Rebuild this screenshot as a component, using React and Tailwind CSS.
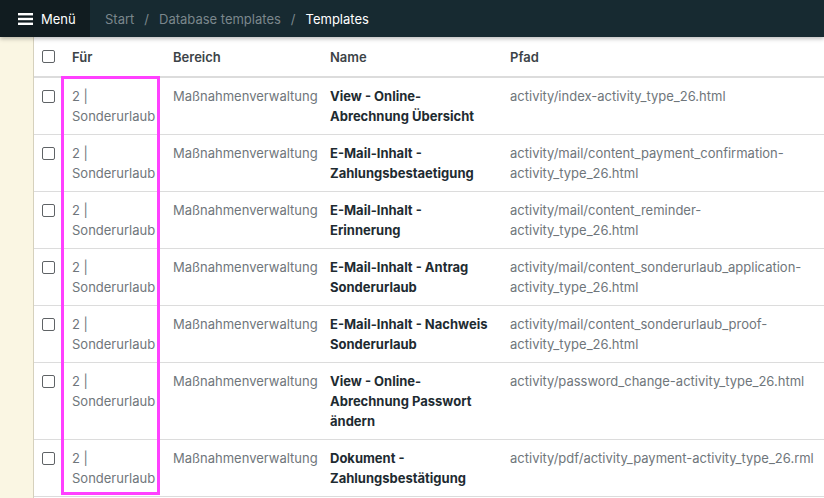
import React from "react";

const rows = [
  ["View - Online-Abrechnung Übersicht", "activity/index-activity_type_26.html"],
  ["E-Mail-Inhalt - Zahlungsbestaetigung", "activity/mail/content_payment_confirmation-activity_type_26.html"],
  ["E-Mail-Inhalt - Erinnerung", "activity/mail/content_reminder-activity_type_26.html"],
  ["E-Mail-Inhalt - Antrag Sonderurlaub", "activity/mail/content_sonderurlaub_application-activity_type_26.html"],
  ["E-Mail-Inhalt - Nachweis Sonderurlaub", "activity/mail/content_sonderurlaub_proof-activity_type_26.html"],
  ["View - Online-Abrechnung Passwort ändern", "activity/password_change-activity_type_26.html"],
  ["Dokument - Zahlungsbestätigung", "activity/pdf/activity_payment-activity_type_26.rml"],
];

function Box() {
  return <span className="block w-[13px] h-[13px] rounded-[2px] border border-[#5f6366] bg-white" />;
}

export default function App() {
  return (
    <div className="w-[824px] h-[498px] overflow-hidden bg-white font-['Inter',sans-serif] text-[13px] leading-[20px]">
      <div className="relative z-10 h-[37px] flex items-center bg-[#172a31] shadow-[0_2px_4px_rgba(0,0,0,0.25)]">
        <div className="h-full w-[90px] bg-[#111c20] flex items-center pl-[18px] gap-[8px] text-white">
          <svg width="15" height="12" viewBox="0 0 15 12">
            <rect x="0" y="0" width="15" height="2.4" fill="white" />
            <rect x="0" y="4.8" width="15" height="2.4" fill="white" />
            <rect x="0" y="9.6" width="15" height="2.4" fill="white" />
          </svg>
          <span>Menü</span>
        </div>
        <div className="pl-[15px] flex items-center text-[#7b878c]">
          <span>Start</span>
          <span className="px-[10px]">/</span>
          <span>Database templates</span>
          <span className="px-[10px]">/</span>
          <span className="text-white">Templates</span>
        </div>
      </div>
      <div className="flex h-[461px]">
        <div className="w-[34px] shrink-0 bg-[#faf6e3] border-r border-[#d6d1bd]" />
        <div className="relative flex-1 min-w-0">
          <table className="table-fixed border-collapse w-[790px]">
            <colgroup>
              <col className="w-[28px]" />
              <col className="w-[101px]" />
              <col className="w-[157px]" />
              <col className="w-[180px]" />
              <col className="w-[324px]" />
            </colgroup>
            <thead>
              <tr className="h-[40px] border-b-2 border-[#dcdcdc] text-left text-[#3c4347] font-semibold">
                <th className="pl-[8px] align-middle"><Box /></th>
                <th className="pl-[10px] font-semibold">Für</th>
                <th className="pl-[10px] font-semibold">Bereich</th>
                <th className="pl-[10px] font-semibold">Name</th>
                <th className="pl-[10px] font-semibold">Pfad</th>
              </tr>
            </thead>
            <tbody>
              {rows.map(([name, path], i) => (
                <tr key={i} className="border-b border-[#dcdcdc] align-top">
                  <td className="pl-[8px] pt-[12px]"><Box /></td>
                  <td className="pl-[10px] pr-[6px] pt-[8px] pb-[8px] text-[#6f767b]">2 | Sonderurlaub</td>
                  <td className="pl-[10px] pt-[8px] pb-[8px] text-[#6f767b]">Maßnahmenverwaltung</td>
                  <td className="pl-[10px] pr-[8px] pt-[8px] pb-[8px] font-bold text-[#1e2b31]">{name}</td>
                  <td className="pl-[10px] pr-[4px] pt-[8px] pb-[8px] text-[#6f767b]">{path}</td>
                </tr>
              ))}
            </tbody>
          </table>
          <div className="absolute left-[27px] top-[39px] w-[99px] h-[419px] border-[3px] border-[#ff40ff] pointer-events-none" />
        </div>
      </div>
    </div>
  );
}
